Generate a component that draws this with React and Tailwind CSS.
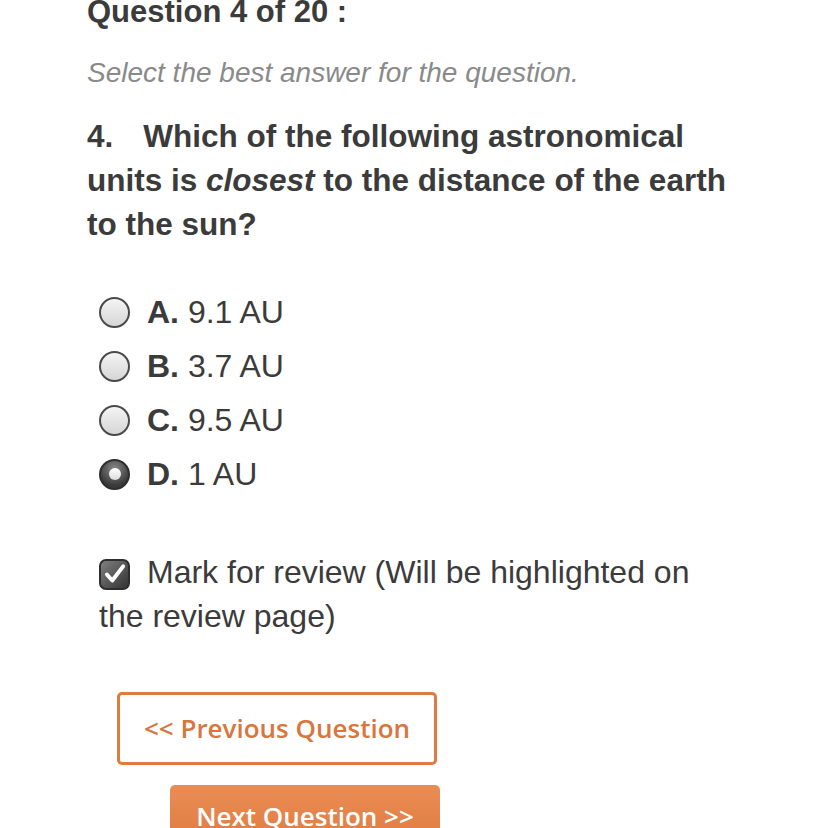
import React from "react";

function Radio({ checked }) {
  if (checked) {
    return (
      <span className="flex h-[31px] w-[31px] shrink-0 items-center justify-center rounded-full border-2 border-[#2e2e2e] bg-[radial-gradient(circle_at_50%_30%,#8a8a8a,#3a3a3a_70%)]">
        <span className="h-[12px] w-[12px] rounded-full bg-[linear-gradient(#ffffff,#dcdcdc)]" />
      </span>
    );
  }
  return (
    <span className="h-[31px] w-[31px] shrink-0 rounded-full border-2 border-[#4a4a4a] bg-[linear-gradient(#f4f4f4,#d6d6d6)]" />
  );
}

function Option({ letter, value, checked }) {
  return (
    <div className="flex h-[54px] items-center gap-[17px] pl-[12px]">
      <Radio checked={checked} />
      <div className="text-[32px] text-[#3b3b3b]">
        <span className="font-bold">{letter}.</span> {value}
      </div>
    </div>
  );
}

export default function App() {
  return (
    <div className="h-[828px] w-[828px] overflow-hidden bg-white font-['Liberation_Sans',Arial,sans-serif]">
      <div className="pl-[87px] pr-[101px]">
        <div className="mt-[-8px] text-[31px] font-bold leading-[40px] text-[#3b3b3b]">Question 4 of 20 :</div>
        <div className="mt-[23px] text-[28px] italic leading-[36px] text-[#8a8a8a]">
          Select the best answer for the question.
        </div>
        <div className="mt-[23px] text-[31.5px] font-bold leading-[44px] text-[#3b3b3b]">
          4.<span className="inline-block w-[30px]" />Which of the following astronomical units is <em>closest</em> to the distance of the earth to the sun?
        </div>

        <div className="mt-[39px] flex flex-col">
          <Option letter="A" value="9.1 AU" />
          <Option letter="B" value="3.7 AU" />
          <Option letter="C" value="9.5 AU" />
          <Option letter="D" value="1 AU" checked />
        </div>

        <div className="mt-[49px] pl-[12px] text-[32px] leading-[44px] text-[#3b3b3b]">
          <span className="mr-[17px] inline-flex h-[31px] w-[31px] translate-y-[4px] items-center justify-center rounded-[7px] border-2 border-[#2e2e2e] bg-[linear-gradient(135deg,#808080,#333333)] align-baseline">
            <svg viewBox="0 0 24 24" className="h-[26px] w-[26px]" fill="none" stroke="#ffffff" strokeWidth="3.6" strokeLinecap="round" strokeLinejoin="round">
              <path d="M4.5 12.5l5 5.5L19.5 5" />
            </svg>
          </span>
          Mark for review (Will be highlighted on the review page)
        </div>

        <div className="mt-[54px] flex flex-col items-start pl-[30px]">
          <button className="flex h-[73px] w-[320px] items-center justify-center rounded-[5px] border-[3px] border-[#dc7c43] bg-white font-['Open_Sans',sans-serif] text-[26px] font-semibold text-[#d8763d]">
            &lt;&lt; Previous Question
          </button>
          <button className="ml-[53px] mt-[20px] flex h-[60px] w-[270px] items-start justify-center rounded-[5px] bg-[linear-gradient(#e98d55,#e07b40)] pt-[18px] font-['Open_Sans',sans-serif] text-[26px] font-semibold leading-none text-white">
            Next Question &gt;&gt;
          </button>
        </div>
      </div>
    </div>
  );
}
